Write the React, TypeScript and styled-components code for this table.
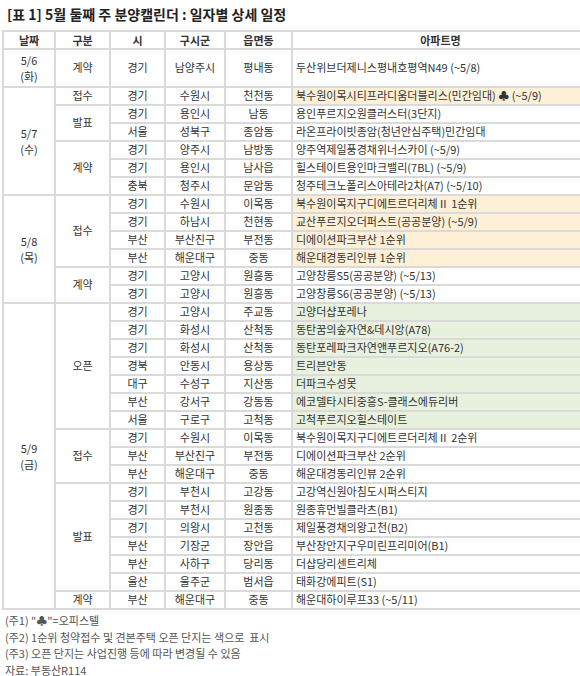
import React from 'react';
import styled, {createGlobalStyle} from "styled-components";

type Tone = 'peach' | 'green'

type RowType = {
    city: string
    district: string
    town: string
    name: string
    tone?: Tone
}

type GroupType = {
    kind: string
    rows: RowType[]
}

type DayType = {
    date: string
    weekday: string
    groups: GroupType[]
}

const days: DayType[] = [
    {
        date: '5/6', weekday: '(화)', groups: [
            {kind: '계약', rows: [{city: '경기', district: '남양주시', town: '평내동', name: '두산위브더제니스평내호평역N49 (~5/8)'}]},
        ]
    },
    {
        date: '5/7', weekday: '(수)', groups: [
            {kind: '접수', rows: [{city: '경기', district: '수원시', town: '천천동', name: '북수원이목시티프라디움더블리스(민간임대) ♣ (~5/9)', tone: 'peach'}]},
            {kind: '발표', rows: [
                {city: '경기', district: '용인시', town: '남동', name: '용인푸르지오원클러스터(3단지)'},
                {city: '서울', district: '성북구', town: '종암동', name: '라온프라이빗종암(청년안심주택)민간임대'},
            ]},
            {kind: '계약', rows: [
                {city: '경기', district: '양주시', town: '남방동', name: '양주역제일풍경채위너스카이 (~5/9)'},
                {city: '경기', district: '용인시', town: '남사읍', name: '힐스테이트용인마크밸리(7BL) (~5/9)'},
                {city: '충북', district: '청주시', town: '문암동', name: '청주테크노폴리스아테라2차(A7) (~5/10)'},
            ]},
        ]
    },
    {
        date: '5/8', weekday: '(목)', groups: [
            {kind: '접수', rows: [
                {city: '경기', district: '수원시', town: '이목동', name: '북수원이목지구디에트르더리체Ⅱ 1순위', tone: 'peach'},
                {city: '경기', district: '하남시', town: '천현동', name: '교산푸르지오더퍼스트(공공분양) (~5/9)', tone: 'peach'},
                {city: '부산', district: '부산진구', town: '부전동', name: '디에이션파크부산 1순위', tone: 'peach'},
                {city: '부산', district: '해운대구', town: '중동', name: '해운대경동리인뷰 1순위', tone: 'peach'},
            ]},
            {kind: '계약', rows: [
                {city: '경기', district: '고양시', town: '원흥동', name: '고양창릉S5(공공분양) (~5/13)'},
                {city: '경기', district: '고양시', town: '원흥동', name: '고양창릉S6(공공분양) (~5/13)'},
            ]},
        ]
    },
    {
        date: '5/9', weekday: '(금)', groups: [
            {kind: '오픈', rows: [
                {city: '경기', district: '고양시', town: '주교동', name: '고양더샵포레나', tone: 'green'},
                {city: '경기', district: '화성시', town: '산척동', name: '동탄꿈의숲자연&데시앙(A78)', tone: 'green'},
                {city: '경기', district: '화성시', town: '산척동', name: '동탄포레파크자연앤푸르지오(A76-2)', tone: 'green'},
                {city: '경북', district: '안동시', town: '용상동', name: '트리븐안동', tone: 'green'},
                {city: '대구', district: '수성구', town: '지산동', name: '더파크수성못', tone: 'green'},
                {city: '부산', district: '강서구', town: '강동동', name: '에코델타시티중흥S-클래스에듀리버', tone: 'green'},
                {city: '서울', district: '구로구', town: '고척동', name: '고척푸르지오힐스테이트', tone: 'green'},
            ]},
            {kind: '접수', rows: [
                {city: '경기', district: '수원시', town: '이목동', name: '북수원이목지구디에트르더리체Ⅱ 2순위'},
                {city: '부산', district: '부산진구', town: '부전동', name: '디에이션파크부산 2순위'},
                {city: '부산', district: '해운대구', town: '중동', name: '해운대경동리인뷰 2순위'},
            ]},
            {kind: '발표', rows: [
                {city: '경기', district: '부천시', town: '고강동', name: '고강역신원아침도시퍼스티지'},
                {city: '경기', district: '부천시', town: '원종동', name: '원종휴먼빌클라츠(B1)'},
                {city: '경기', district: '의왕시', town: '고천동', name: '제일풍경채의왕고천(B2)'},
                {city: '부산', district: '기장군', town: '장안읍', name: '부산장안지구우미린프리미어(B1)'},
                {city: '부산', district: '사하구', town: '당리동', name: '더샵당리센트리체'},
                {city: '울산', district: '울주군', town: '범서읍', name: '태화강에피트(S1)'},
            ]},
            {kind: '계약', rows: [
                {city: '부산', district: '해운대구', town: '중동', name: '해운대하이루프33 (~5/11)'},
            ]},
        ]
    },
]

const notes = [
    '(주1) "♣"=오피스텔',
    '(주2) 1순위 청약접수 및 견본주택 오픈 단지는 색으로  표시',
    '(주3) 오픈 단지는 사업진행 등에 따라 변경될 수 있음',
    '자료: 부동산R114',
]

export default function App() {
    return (
        <>
            <GlobalStyle/>
            <Page>
                <Title>[표 1] 5월 둘째 주 분양캘린더 : 일자별 상세 일정</Title>
                <Table>
                    <colgroup>
                        <col style={{width: 52}}/>
                        <col style={{width: 55}}/>
                        <col style={{width: 55}}/>
                        <col style={{width: 60}}/>
                        <col style={{width: 67}}/>
                        <col/>
                    </colgroup>
                    <thead>
                    <tr>
                        <HeadCell>날짜</HeadCell>
                        <HeadCell>구분</HeadCell>
                        <HeadCell>시</HeadCell>
                        <HeadCell>구시군</HeadCell>
                        <HeadCell>읍면동</HeadCell>
                        <HeadCell>아파트명</HeadCell>
                    </tr>
                    </thead>
                    <tbody>
                    {days.map(day => {
                        const total = day.groups.reduce((n, g) => n + g.rows.length, 0)
                        const tall = total === 1
                        return day.groups.map((group, gi) =>
                            group.rows.map((row, ri) => (
                                <tr key={day.date + gi + ri}>
                                    {gi === 0 && ri === 0 && (
                                        <DateCell rowSpan={total} $tall={tall}>
                                            <DateLine>{day.date}</DateLine>
                                            <DateLine>{day.weekday}</DateLine>
                                        </DateCell>
                                    )}
                                    {ri === 0 && <Cell rowSpan={group.rows.length}>{group.kind}</Cell>}
                                    <Cell>{row.city}</Cell>
                                    <Cell>{row.district}</Cell>
                                    <Cell>{row.town}</Cell>
                                    <NameCell $tone={row.tone}>{row.name}</NameCell>
                                </tr>
                            ))
                        )
                    })}
                    </tbody>
                </Table>
                <Notes>
                    {notes.map(n => <Note key={n}>{n}</Note>)}
                </Notes>
            </Page>
        </>
    );
};

const GlobalStyle = createGlobalStyle`
  body {
    margin: 0;
    background: #fff;
    overflow: hidden;
  }
`

const Page = styled.div`
  width: 580px;
  font-family: "Noto Sans CJK KR", "Noto Sans", sans-serif;
  color: #333;
`

const Title = styled.div`
  height: 30px;
  padding-left: 7px;
  font-size: 14px;
  font-weight: 700;
  line-height: 28px;
  color: #222;
  white-space: nowrap;
`

const Table = styled.table`
  margin-left: 2px;
  width: 588px;
  table-layout: fixed;
  border-collapse: collapse;
  font-size: 11px;
`

const HeadCell = styled.th`
  height: 16px;
  padding: 0;
  border: 2px solid #dadada;
  font-weight: 700;
  line-height: 16px;
  text-align: center;
  white-space: nowrap;
`

const Cell = styled.td`
  height: 16px;
  padding: 0;
  border: 2px solid #dadada;
  line-height: 15.9px;
  text-align: center;
  white-space: nowrap;
`

const DateCell = styled(Cell)<{ $tall: boolean }>`
  height: ${p => p.$tall ? '36px' : '16px'};
`

const DateLine = styled.div`
  line-height: 16px;
`

const NameCell = styled(Cell)<{ $tone?: Tone }>`
  padding-left: 3px;
  text-align: left;
  background: ${p => p.$tone === 'peach' ? '#fdf0d6' : p.$tone === 'green' ? '#e8f0de' : '#fff'};
`

const Notes = styled.div`
  padding: 2px 0 0 5px;
`

const Note = styled.div`
  font-size: 11px;
  line-height: 16.5px;
  color: #555;
  white-space: pre;
`
